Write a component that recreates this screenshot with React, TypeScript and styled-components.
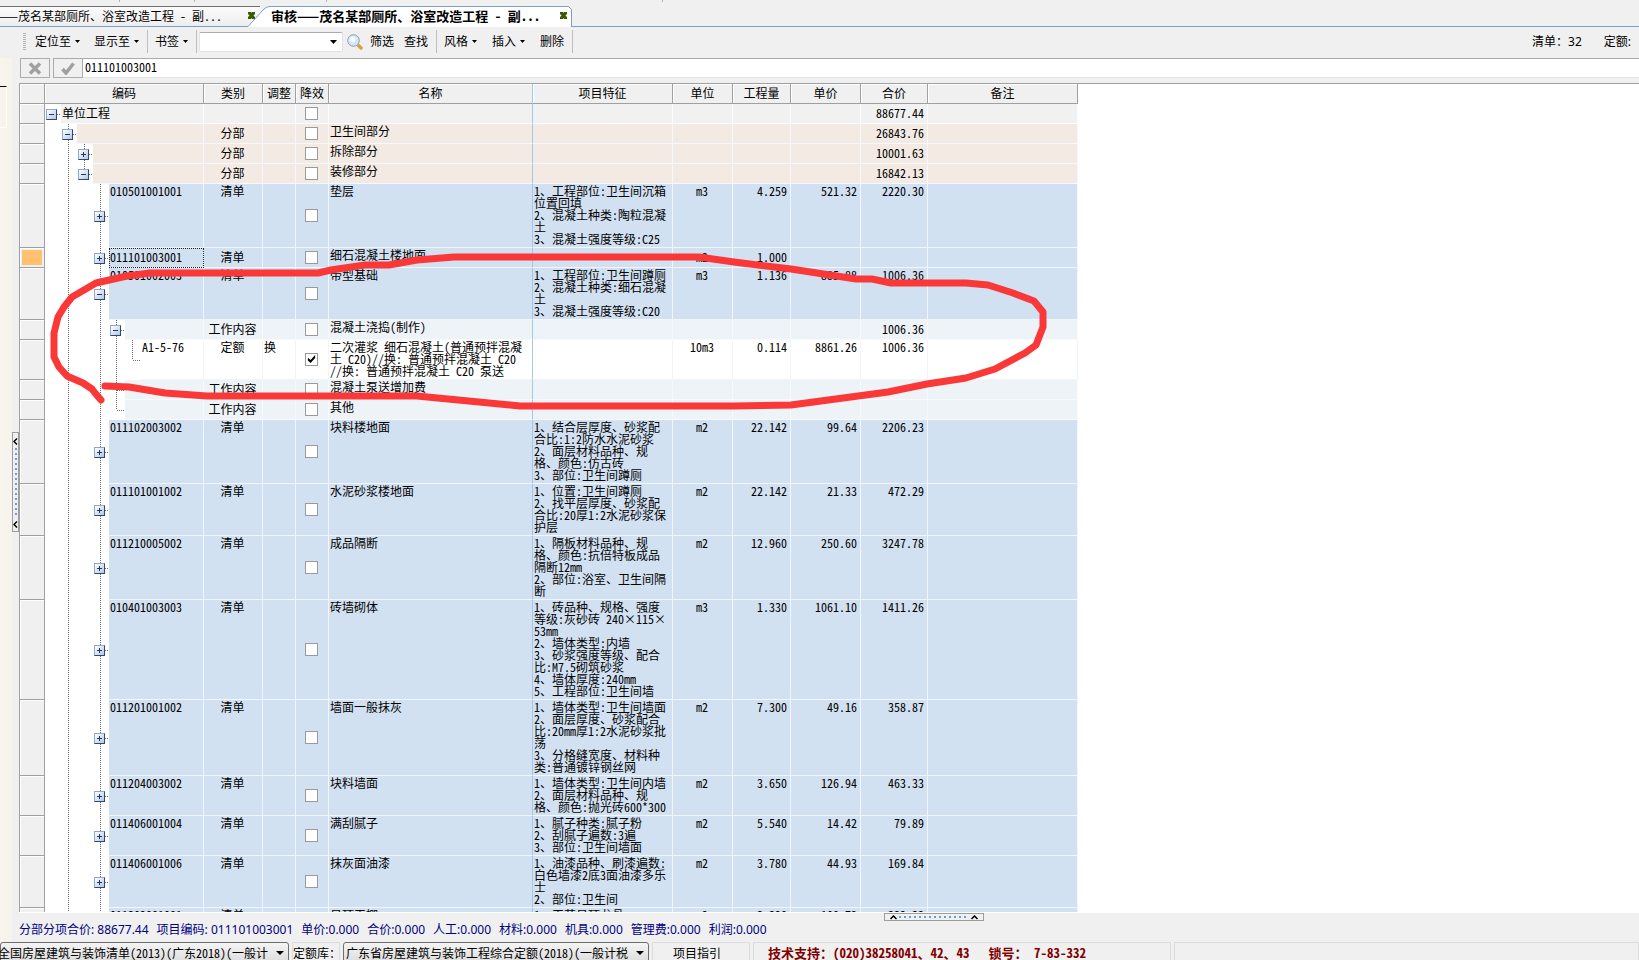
import React from "react";
import styled, { createGlobalStyle } from "styled-components";

const song = `"Noto Sans Mono CJK SC", "Noto Sans CJK SC", monospace`;
const yahei = `"Noto Sans", "Noto Sans CJK SC", sans-serif`;

const Global = createGlobalStyle`
  * { box-sizing: border-box; }
  html, body { margin: 0; padding: 0; overflow: hidden; }
  body, button, input, select { font-family: ${song}; font-size: 12px; color: #000; }
  button { padding: 0; background: none; border: 0; }
`;

const Window = styled.div`
  display: flex;
  flex-direction: column;
  height: 100vh;
  background: #f0f0f0;
  overflow: hidden;
`;

/* ---------- document tabs ---------- */
const TopEdge = styled.div`
  display: flex;
  height: 6px;
  flex: none;
`;
const Tick = styled.span<{ $gap: number }>`
  width: 1px;
  height: 2px;
  margin-left: ${(p) => p.$gap}px;
  background: #b4b4b4;
`;
const TabStrip = styled.div`
  display: flex;
  flex: none;
  height: 21px;
  border-bottom: 1px solid #7a9fc0;
`;
const Tab = styled.div<{ $active?: boolean }>`
  position: relative;
  display: flex;
  align-items: flex-start;
  justify-content: space-between;
  width: ${(p) => (p.$active ? 324 : 260)}px;
  height: ${(p) => (p.$active ? 21 : 20)}px;
  margin-left: ${(p) => (p.$active ? -12 : 0)}px;
  padding-left: ${(p) => (p.$active ? 23 : 0)}px;
  padding-right: 5px;
  border-top: 1px solid ${(p) => (p.$active ? "transparent" : "#6f6f6f")};
  background: ${(p) => (p.$active ? "none" : "linear-gradient(#fcfcfc, #ededed)")};
  font-size: ${(p) => (p.$active ? 13 : 12)}px;
  font-weight: ${(p) => (p.$active ? 700 : 400)};
  white-space: pre;
`;
const TabShape = styled.svg`
  position: absolute;
  inset: -1px 0 0;
  width: 100%;
  height: 21px;
`;
const TabTitle = styled.span`
  position: relative;
  line-height: 18px;
`;
const CutTitle = styled(TabTitle)`
  margin-left: -2px;
`;
const TabClose = styled.button`
  position: relative;
  display: flex;
  margin-top: 5px;
`;

/* ---------- tool bar ---------- */
const ToolBar = styled.div`
  display: flex;
  flex: none;
  align-items: center;
  height: 31px;
  padding: 0 8px 2px 23px;
  font-family: ${yahei};
`;
const Grip = styled.span`
  width: 3px;
  height: 18px;
  background: repeating-linear-gradient(#b4b4b4 0 1px, transparent 1px 2px);
`;
const ToolButton = styled.button`
  display: flex;
  align-items: center;
  gap: 4px;
  padding: 0 5px;
  font-family: ${yahei};
  line-height: 20px;
  white-space: nowrap;
`;
const ToolGroup = styled.div<{ $gap?: number }>`
  display: flex;
  align-items: center;
  gap: ${(p) => p.$gap ?? 0}px;
  padding: 0 3px 0 2px;
`;
const MainGroup = styled(ToolGroup)`
  padding-left: 4px;
`;
const Divider = styled.span`
  width: 1px;
  height: 23px;
  background: #bdbdbd;
`;
const SearchBox = styled.div`
  display: flex;
  align-items: center;
  width: 144px;
  height: 20px;
  padding-right: 5px;
  margin: 0 4px 0 2px;
  border: 1px solid #dfe3e8;
  border-top-color: #a9adb3;
  border-radius: 2px;
  background: #fff;
`;
const SearchInput = styled.input`
  flex: 1;
  min-width: 0;
  border: 0;
  outline: 0;
  background: transparent;
`;
const Counters = styled.div`
  display: flex;
  gap: 22px;
  margin-left: auto;
  font-family: ${yahei};
  line-height: 20px;
  white-space: pre;
`;

/* ---------- body ---------- */
const Body = styled.div`
  display: flex;
  flex: 1;
  min-height: 0;
`;
const SideDock = styled.div`
  width: 12px;
  flex: none;
  padding-top: 28px;
  background: linear-gradient(90deg, #f8f5ee, #f6f3ec);
`;
const DockPanel = styled.div`
  width: 7px;
  height: 42px;
  border-top: 1px solid #000;
  border-right: 1px solid #fff;
  border-bottom: 1px solid #fff;
`;
const SideSplitter = styled.div`
  display: flex;
  flex: none;
  align-items: center;
  width: 7px;
  padding-bottom: 36px;
`;
const SideHandle = styled.button`
  display: flex;
  flex-direction: column;
  align-items: center;
  justify-content: space-between;
  width: 7px;
  height: 100px;
  padding: 5px 0 3px;
  border: 1px solid #9d9d9d;
`;
const SideDots = styled.span`
  width: 2px;
  height: 70px;
  background: repeating-linear-gradient(#6d9be0 0 2px, transparent 2px 5px);
`;
const Main = styled.main`
  display: flex;
  flex: 1;
  flex-direction: column;
  min-width: 0;
`;
const EditBar = styled.div`
  display: flex;
  flex: none;
  gap: 3px;
  height: 25px;
  padding: 0 0 5px 1px;
`;
const EditButton = styled.button`
  display: flex;
  align-items: center;
  justify-content: center;
  width: 30px;
  height: 20px;
  border: 1px solid #ababab;
`;
const CodeInput = styled.input`
  flex: 1;
  min-width: 0;
  height: 20px;
  margin-left: -3px;
  padding: 0 2px 4px;
  border: 0;
  border-top: 1px solid #ababab;
  border-bottom: 1px solid #e3e3e3;
  outline: 0;
  background: #fff;
`;
const GridPane = styled.div`
  position: relative;
  flex: 1;
  min-height: 0;
  overflow: hidden;
  border-top: 1px solid #a0a0a0;
  border-left: 1px solid #a0a0a0;
  background: #fff;
`;

type Kind = "root" | "section" | "list" | "work" | "quota";
const fill: Record<Kind, string> = {
  root: "#f1f1f1",
  section: "#f2eae3",
  list: "#d2e1f2",
  work: "#eef3f8",
  quota: "#ffffff",
};
const rule: Record<Kind, string> = {
  root: "#fafcff",
  section: "#f6f8fc",
  list: "#f2f7fd",
  work: "#f7fafd",
  quota: "#f1f4f9",
};

const Table = styled.table`
  width: 1058px;
  table-layout: fixed;
  border-spacing: 0;
  line-height: 12px;
`;
const Head = styled.th<{ $pin?: boolean }>`
  height: 20px;
  padding: 0 0 2px;
  border-bottom: 1px solid #a0a0a0;
  border-right: 1px solid ${(p) => (p.$pin ? "#a3c6ea" : "#a0a0a0")};
  background: #f0f0f0;
  box-shadow: inset 1px 1px #fff;
  font-weight: 400;
`;
const Gutter = styled.td<{ $current?: boolean }>`
  padding: 0;
  border-right: 1px solid #a0a0a0;
  border-bottom: 1px solid #a0a0a0;
  background: ${(p) => (p.$current ? "#ffc070" : "#f0f0f0")};
  box-shadow: inset 1px 1px #fff${(p) => (p.$current ? ", inset 0 0 0 2px #f0f0f0" : "")};
`;
const Cell = styled.td<{ $kind: Kind; $align?: string; $middle?: boolean; $pin?: boolean }>`
  height: 20px;
  padding: 1px ${(p) => (p.$align === "right" ? 3 : 2)}px 2px 1px;
  border-right: 1px solid ${(p) => (p.$pin ? "#a3c6ea" : rule[p.$kind])};
  border-bottom: 1px solid ${(p) => rule[p.$kind]};
  background: ${(p) => fill[p.$kind]};
  text-align: ${(p) => p.$align || "left"};
  vertical-align: ${(p) => (p.$middle ? "middle" : "top")};
  white-space: pre;
`;
const TreeCell = styled.td`
  height: 20px;
  padding: 0;
`;
const TreeLine = styled.div`
  display: flex;
  height: 100%;
`;
const dotsV = "repeating-linear-gradient(#6b6b6b 0 1px, transparent 1px 2px)";
const dotsH = "repeating-linear-gradient(90deg, #6b6b6b 0 1px, transparent 1px 2px)";
const Guide = styled.span<{ $line: boolean }>`
  width: 16px;
  flex: none;
  background: ${(p) => (p.$line ? dotsV : "none")} 7px 0 / 1px 100% no-repeat;
`;
const Node = styled.span<{ $up: boolean; $down: boolean }>`
  display: flex;
  flex: none;
  align-items: center;
  width: 16px;
  padding-left: 1px;
  background:
    ${dotsH} 8px 50% / 8px 1px no-repeat,
    ${(p) => (p.$up ? dotsV : "linear-gradient(transparent, transparent)")} 7px 0 / 1px 50% no-repeat,
    ${(p) => (p.$down ? dotsV : "linear-gradient(transparent, transparent)")} 7px 100% / 1px 50% no-repeat;
`;
const Toggle = styled.button`
  display: flex;
  width: 11px;
  height: 11px;
  border: 1px solid #93a8c4;
  border-right-color: #2f4a70;
  border-bottom-color: #2f4a70;
  background: linear-gradient(135deg, #fff, #b4c7e6);
`;
const CodeText = styled.div<{ $kind: Kind; $middle: boolean; $focus?: boolean }>`
  display: flex;
  flex: 1;
  align-items: ${(p) => (p.$middle ? "center" : "flex-start")};
  padding: 1px 0 2px 1px;
  border-right: 1px solid ${(p) => rule[p.$kind]};
  border-bottom: 1px solid ${(p) => rule[p.$kind]};
  background: ${(p) => fill[p.$kind]};
  outline: ${(p) => (p.$focus ? "1px dotted #222" : "0")};
  outline-offset: -1px;
`;
const Check = styled.input`
  display: block;
  appearance: none;
  width: 13px;
  height: 13px;
  margin: 0 auto;
  border: 1px solid #9a9a9a;
  background: #fff;
  &:checked::before {
    content: "";
    display: block;
    width: 9px;
    height: 9px;
    margin: 1px;
    background: #000;
    clip-path: polygon(10% 35%, 40% 62%, 90% 5%, 90% 38%, 40% 95%, 10% 68%);
  }
`;
const Ink = styled.svg`
  position: absolute;
  left: 0;
  top: 0;
  pointer-events: none;
`;

/* ---------- status and bottom bars ---------- */
const StatusBar = styled.div`
  position: relative;
  display: flex;
  flex: none;
  align-items: center;
  gap: 8px;
  height: 30px;
  padding-top: 2px;
  border-top: 1px solid #fff;
  color: #000080;
  font-family: ${yahei};
  white-space: pre;
`;
const BottomHandle = styled.button`
  position: absolute;
  top: 0;
  left: 865px;
  display: flex;
  align-items: center;
  justify-content: space-between;
  width: 100px;
  height: 8px;
  padding: 0 5px;
  border: 1px solid #9d9d9d;
`;
const BottomDots = styled.span`
  width: 70px;
  height: 2px;
  background: repeating-linear-gradient(90deg, #6d9be0 0 2px, transparent 2px 5px);
`;
const BottomBar = styled.footer`
  display: flex;
  flex: none;
  gap: 3px;
  height: 18px;
  overflow: hidden;
`;
const Library = styled.div<{ $width: number }>`
  position: relative;
  display: flex;
  flex: none;
  width: ${(p) => p.$width}px;
  height: 22px;
  border: 1px solid #6f6f6f;
  border-radius: 3px;
  background: linear-gradient(#f4f4f4, #dcdcdc);
`;
const LibrarySelect = styled.select<{ $cut?: boolean }>`
  appearance: none;
  flex: 1;
  min-width: 0;
  margin-left: ${(p) => (p.$cut ? -3 : 2)}px;
  margin-right: 20px;
  padding: 0 0 2px;
  border: 0;
  outline: 0;
  background: transparent;
`;
const LibraryArrow = styled.span`
  position: absolute;
  right: 4px;
  top: 8px;
  display: flex;
`;
const Slot = styled.div<{ $width: number; $center?: boolean }>`
  display: flex;
  flex: none;
  justify-content: ${(p) => (p.$center ? "center" : "flex-start")};
  width: ${(p) => p.$width}px;
  height: 22px;
  padding: 1px ${(p) => (p.$center ? 8 : 0)}px 0 0;
  border: 1px solid #dcdcdc;
  line-height: 18px;
  white-space: pre;
`;
const Support = styled(Slot)`
  gap: 19px;
  padding-left: 14px;
  color: #800000;
  font-size: 13px;
  font-weight: 700;
`;
const Rest = styled(Slot)`
  flex: 1;
`;

const Caret = ({ w = 5 }: { w?: number }) => (
  <svg width={w} height={w === 5 ? 3 : 4} viewBox="0 0 8 4" preserveAspectRatio="none" aria-hidden>
    <path d="M0 0H8L4 4Z" fill="#000" />
  </svg>
);
const CloseMark = () => (
  <svg width="7" height="7" viewBox="0 0 7 7" aria-hidden>
    <path d="M0 0H3L3.5 1L4 0H7V2L5.5 3.5L7 5V7H4L3.5 6L3 7H0V5L1.5 3.5L0 2Z" fill="#3c5a00" />
  </svg>
);
const Magnifier = () => (
  <svg width="16" height="16" viewBox="0 0 16 16" aria-hidden>
    <path d="M11 11L12 12" stroke="#8a9bb0" strokeWidth="3" />
    <path d="M12 12L14 14" stroke="#d9a236" strokeWidth="3.5" strokeLinecap="round" />
    <circle cx="6.5" cy="6.5" r="5.8" fill="#d3e6fa" stroke="#8d9db3" />
    <circle cx="5.5" cy="5.5" r="3" fill="#f2f9ff" />
  </svg>
);
const Chevron = ({ up }: { up?: boolean }) => (
  <svg width={up ? 7 : 5} height={up ? 5 : 7} viewBox={up ? "0 0 7 5" : "0 0 5 7"} aria-hidden>
    <path d={up ? "M0.5 4L3.5 1L6.5 4" : "M4 0.5L1 3.5L4 6.5"} fill="none" stroke="#000" strokeWidth="1.5" />
  </svg>
);
const PlusMinus = ({ open }: { open: boolean }) => (
  <svg width="9" height="9" viewBox="0 0 9 9" aria-hidden>
    <path d={open ? "M2 4.5H7" : "M2 4.5H7M4.5 2V7"} stroke="#1d3a63" />
  </svg>
);

type Row = {
  kind: Kind;
  /* guides to the left of the node: "|" draws a line, "." leaves a gap */
  guides: string;
  node: "+" | "-" | "leaf";
  up?: boolean;
  down?: boolean;
  code?: string;
  type?: string;
  adjust?: string;
  checked?: boolean;
  name?: string;
  spec?: string[];
  unit?: string;
  qty?: string;
  price?: string;
  total?: string;
  current?: boolean;
};

const item = (code: string, name: string, spec: string[], unit: string, qty: string, price = "", total = "", more: Partial<Row> = {}): Row => ({
  kind: "list", guides: ".|.", node: "+", up: true, down: true, type: "清单", code, name, spec, unit, qty, price, total, ...more,
});

const rows: Row[] = [
  { kind: "root", guides: "", node: "-", code: "单位工程", total: "88677.44" },
  { kind: "section", guides: ".", node: "-", up: true, down: true, type: "分部", name: "卫生间部分", total: "26843.76" },
  { kind: "section", guides: ".|", node: "+", up: true, down: true, type: "分部", name: "拆除部分", total: "10001.63" },
  { kind: "section", guides: ".|", node: "-", up: true, type: "分部", name: "装修部分", total: "16842.13" },
  item("010501001001", "垫层", ["1、工程部位:卫生间沉箱", "位置回填", "2、混凝土种类:陶粒混凝", "土", "3、混凝土强度等级:C25"], "m3", "4.259", "521.32", "2220.30"),
  item("011101003001", "细石混凝土楼地面", [], "m2", "1.000", "", "", { current: true }),
  item("010501002003", "带型基础", ["1、工程部位:卫生间蹲厕", "2、混凝土种类:细石混凝", "土", "3、混凝土强度等级:C20"], "m3", "1.136", "885.88", "1006.36", { node: "-" }),
  { kind: "work", guides: ".|.|", node: "-", up: true, down: true, type: "工作内容", name: "混凝土浇捣(制作)", total: "1006.36" },
  {
    kind: "quota", guides: ".|.||", node: "leaf", up: true, code: "A1-5-76", type: "定额", adjust: "换", checked: true,
    name: "二次灌浆 细石混凝土(普通预拌混凝\n土 C20)//换: 普通预拌混凝土 C20\n//换: 普通预拌混凝土 C20 泵送",
    unit: "10m3", qty: "0.114", price: "8861.26", total: "1006.36",
  },
  { kind: "work", guides: ".|.|", node: "leaf", up: true, down: true, type: "工作内容", name: "混凝土泵送增加费" },
  { kind: "work", guides: ".|.|", node: "leaf", up: true, type: "工作内容", name: "其他" },
  item("011102003002", "块料楼地面", ["1、结合层厚度、砂浆配", "合比:1:2防水水泥砂浆", "2、面层材料品种、规", "格、颜色:仿古砖", "3、部位:卫生间蹲厕"], "m2", "22.142", "99.64", "2206.23"),
  item("011101001002", "水泥砂浆楼地面", ["1、位置:卫生间蹲厕", "2、找平层厚度、砂浆配", "合比:20厚1:2水泥砂浆保", "护层"], "m2", "22.142", "21.33", "472.29"),
  item("011210005002", "成品隔断", ["1、隔板材料品种、规", "格、颜色:抗倍特板成品", "隔断12mm", "2、部位:浴室、卫生间隔", "断"], "m2", "12.960", "250.60", "3247.78"),
  item("010401003003", "砖墙砌体", ["1、砖品种、规格、强度", "等级:灰砂砖 240×115×", "53mm", "2、墙体类型:内墙", "3、砂浆强度等级、配合", "比:M7.5砌筑砂浆", "4、墙体厚度:240mm", "5、工程部位:卫生间墙"], "m3", "1.330", "1061.10", "1411.26"),
  item("011201001002", "墙面一般抹灰", ["1、墙体类型:卫生间墙面", "2、面层厚度、砂浆配合", "比:20mm厚1:2水泥砂浆批", "荡", "3、分格缝宽度、材料种", "类:普通镀锌钢丝网"], "m2", "7.300", "49.16", "358.87"),
  item("011204003002", "块料墙面", ["1、墙体类型:卫生间内墙", "2、面层材料品种、规", "格、颜色:抛光砖600*300"], "m2", "3.650", "126.94", "463.33"),
  item("011406001004", "满刮腻子", ["1、腻子种类:腻子粉", "2、刮腻子遍数:3遍", "3、部位:卫生间墙面"], "m2", "5.540", "14.42", "79.89"),
  item("011406001006", "抹灰面油漆", ["1、油漆品种、刷漆遍数:", "白色墙漆2底3面油漆多乐", "士", "2、部位:卫生间"], "m2", "3.780", "44.93", "169.84"),
  item("011302001001", "吊顶天棚", ["1、工艺吊顶龙骨", "2、部位:卫生间"], "m2", "3.320", "100.72", "333.33"),
];

const columns = [
  { label: "", width: 25 },
  { label: "编码", width: 159 },
  { label: "类别", width: 59 },
  { label: "调整", width: 33 },
  { label: "降效", width: 33 },
  { label: "名称", width: 204, pin: true },
  { label: "项目特征", width: 140 },
  { label: "单位", width: 60 },
  { label: "工程量", width: 58 },
  { label: "单价", width: 70 },
  { label: "合价", width: 67 },
  { label: "备注", width: 150 },
];

const status = ["分部分项合价: 88677.44", "项目编码: 011101003001", "单价:0.000", "合价:0.000", "人工:0.000", "材料:0.000", "机具:0.000", "管理费:0.000", "利润:0.000"];

function GridRow({ row }: { row: Row }) {
  const middle = (row.spec?.length ?? 0) < 2 && row.kind !== "quota";
  const shared = { $kind: row.kind, $middle: middle };
  return (
    <tr>
      <Gutter $current={row.current} />
      <TreeCell>
        <TreeLine>
          {row.guides.split("").map((g, i) => (
            <Guide key={i} $line={g === "|"} />
          ))}
          <Node $up={!!row.up} $down={!!row.down}>
            {row.node !== "leaf" && (
              <Toggle aria-label={row.node === "-" ? "折叠" : "展开"}>
                <PlusMinus open={row.node === "-"} />
              </Toggle>
            )}
          </Node>
          <CodeText {...shared} $focus={row.current}>
            {row.code}
          </CodeText>
        </TreeLine>
      </TreeCell>
      <Cell {...shared} $align="center">{row.type}</Cell>
      <Cell {...shared}>{row.adjust}</Cell>
      <Cell $kind={row.kind} $middle>
        <Check type="checkbox" aria-label="降效" defaultChecked={row.checked} />
      </Cell>
      <Cell $kind={row.kind} $pin>{row.name}</Cell>
      <Cell $kind={row.kind}>{row.spec?.join("\n")}</Cell>
      <Cell {...shared} $align="center">{row.unit}</Cell>
      <Cell {...shared} $align="right">{row.qty}</Cell>
      <Cell {...shared} $align="right">{row.price}</Cell>
      <Cell {...shared} $align="right">{row.total}</Cell>
      <Cell {...shared} />
    </tr>
  );
}

export default function App() {
  return (
    <Window>
      <Global />
      <TopEdge>
        <Tick $gap={119} />
        <Tick $gap={74} />
        <Tick $gap={131} />
        <Tick $gap={335} />
      </TopEdge>
      <TabStrip>
        <Tab>
          <CutTitle>——茂名某部厕所、浴室改造工程 - 副...</CutTitle>
          <TabClose aria-label="关闭"><CloseMark /></TabClose>
        </Tab>
        <Tab $active>
          <TabShape viewBox="0 0 324 21" preserveAspectRatio="none" aria-hidden>
            <path d="M0 21V20.5L16 3Q18.5 0.5 22 0.5H320.5L323.5 3.5V21Z" fill="#fff" />
            <path d="M0 20.5L16 3Q18.5 0.5 22 0.5H320.5L323.5 3.5V21" fill="none" stroke="#7a9fc0" />
          </TabShape>
          <TabTitle>审核——茂名某部厕所、浴室改造工程 - 副...</TabTitle>
          <TabClose aria-label="关闭"><CloseMark /></TabClose>
        </Tab>
      </TabStrip>
      <ToolBar>
        <Grip />
        <MainGroup $gap={4}>
          <ToolButton>定位至<Caret /></ToolButton>
          <ToolButton>显示至<Caret /></ToolButton>
        </MainGroup>
        <Divider />
        <ToolGroup>
          <ToolButton>书签<Caret /></ToolButton>
        </ToolGroup>
        <Divider />
        <SearchBox>
          <SearchInput aria-label="查找内容" />
          <Caret w={7} />
        </SearchBox>
        <Magnifier />
        <ToolGroup>
          <ToolButton>筛选</ToolButton>
          <ToolButton>查找</ToolButton>
        </ToolGroup>
        <Divider />
        <ToolGroup $gap={5}>
          <ToolButton>风格<Caret /></ToolButton>
          <ToolButton>插入<Caret /></ToolButton>
          <ToolButton>删除</ToolButton>
        </ToolGroup>
        <Divider />
        <Counters>
          <span>清单：32</span>
          <span>定额:</span>
        </Counters>
      </ToolBar>
      <Body>
        <SideDock><DockPanel /></SideDock>
        <SideSplitter>
          <SideHandle aria-label="收起侧栏">
            <Chevron />
            <SideDots />
            <Chevron />
          </SideHandle>
        </SideSplitter>
        <Main>
          <EditBar>
            <EditButton aria-label="取消">
              <svg width="14" height="13" viewBox="0 0 14 13" aria-hidden>
                <path d="M2 1.5L12 11.5M12 1.5L2 11.5" stroke="#a0a0a0" strokeWidth="3.5" />
              </svg>
            </EditButton>
            <EditButton aria-label="确定">
              <svg width="14" height="13" viewBox="0 0 14 13" aria-hidden>
                <path d="M1.5 7L5 11L12.5 1.5" fill="none" stroke="#a0a0a0" strokeWidth="3.5" />
              </svg>
            </EditButton>
            <CodeInput aria-label="编码" defaultValue="011101003001" />
          </EditBar>
          <GridPane>
            <Table>
              <colgroup>
                {columns.map((c, i) => <col key={i} width={c.width} />)}
              </colgroup>
              <thead>
                <tr>
                  {columns.map((c, i) => <Head key={i} $pin={c.pin}>{c.label}</Head>)}
                </tr>
              </thead>
              <tbody>
                {rows.map((r, i) => <GridRow key={i} row={r} />)}
              </tbody>
            </Table>
            <Ink width="1060" height="340" viewBox="20 84 1060 340" aria-hidden>
              <path
                d="M101 400L95 393L92 389L83 383L67 376L59 367L54 357V333L58 317L64 307L72 297L96 283L127 276L150 273H318L331 270L365 265H389L417 260L454 257H699L734 262L791 269L856 279H872L891 283H966L988 285L1013 293L1034 301L1043 312V327L1036 345L1025 353L995 369L966 378L927 384L888 392L791 405L734 406H520L510 405L417 396H207L165 393L129 387L105 386"
                fill="none" stroke="#fb3838" strokeWidth="7" strokeLinecap="round" strokeLinejoin="round"
              />
            </Ink>
          </GridPane>
          <StatusBar>
            {status.map((s) => <span key={s}>{s}</span>)}
            <BottomHandle aria-label="展开下方面板">
              <Chevron up />
              <BottomDots />
              <Chevron up />
            </BottomHandle>
          </StatusBar>
        </Main>
      </Body>
      <BottomBar>
        <Library $width={289}>
          <LibrarySelect $cut aria-label="清单库">
            <option>全国房屋建筑与装饰清单(2013)(广东2018)(一般计税)</option>
          </LibrarySelect>
          <LibraryArrow><Caret w={8} /></LibraryArrow>
        </Library>
        <Slot $width={48} as="label" htmlFor="quota">定额库：</Slot>
        <Library $width={306}>
          <LibrarySelect id="quota">
            <option>广东省房屋建筑与装饰工程综合定额(2018)(一般计税</option>
          </LibrarySelect>
          <LibraryArrow><Caret w={8} /></LibraryArrow>
        </Library>
        <Slot $width={98} $center>项目指引</Slot>
        <Support $width={418}>
          <span>技术支持：(020)38258041、42、43</span>
          <span>锁号： 7-83-332</span>
        </Support>
        <Rest $width={0} />
      </BottomBar>
    </Window>
  );
}
